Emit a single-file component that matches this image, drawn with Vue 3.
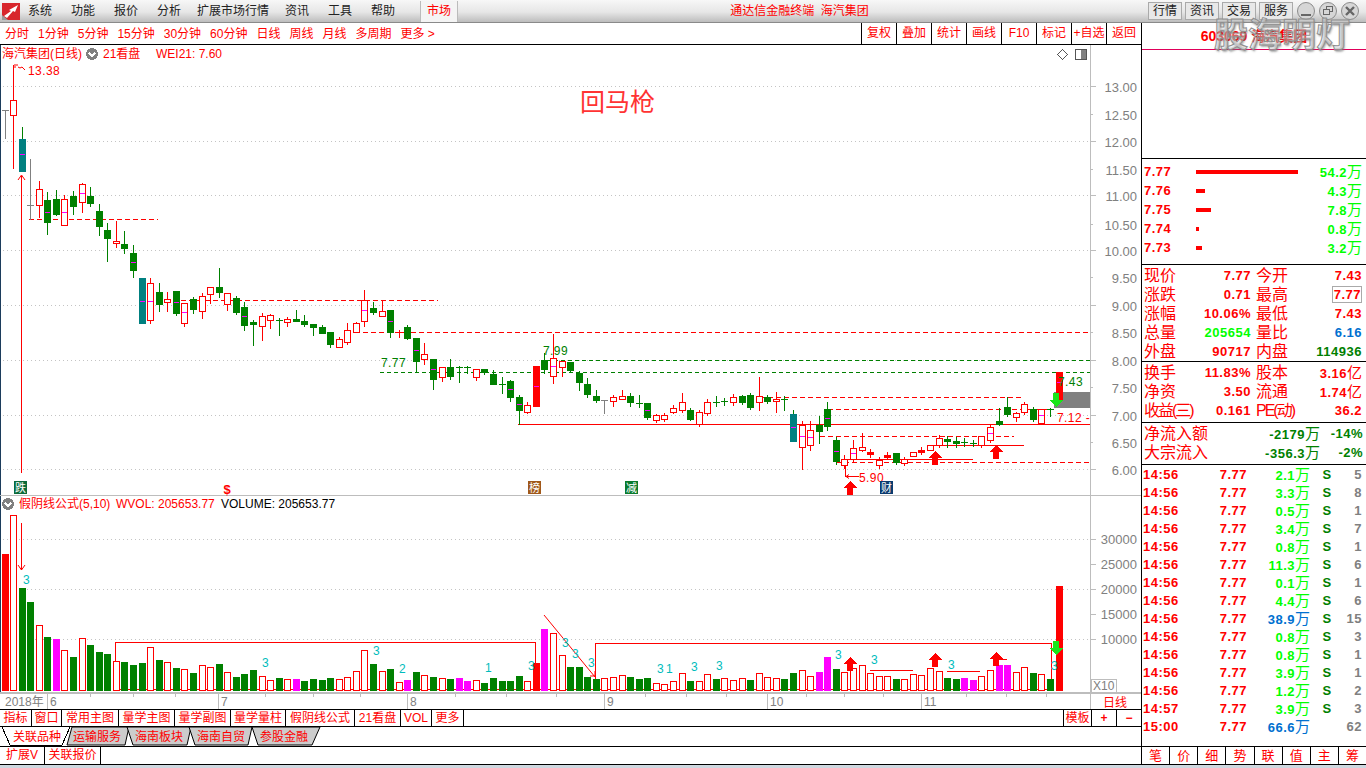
<script setup>
// K-line data: type, body top, body bottom, wick high, wick low, magenta mark (page pixels)
const raw = [
  ['x',110,110,110,138],['h',100,115,65,168],['t',139,171,127,171,154],['x',205,205,159,219],
  ['h',189,205,181,217],['g',200,222,192,234,212],['g',199,214,190,215],['h',199,225,195,225,212],
  ['g',196,206,191,214],['h',184,202,183,212,193],['g',196,203,187,206],['g',211,226,204,235],
  ['g',230,238,223,261],['h',241,243,221,247],['g',244,248,231,253],['g',253,270,245,277,262],
  ['t',278,323,278,323,301],['h',283,320,278,323,301],['g',292,304,283,311],['h',299,302,292,311],
  ['g',291,313,291,315,302],['h',303,323,303,326,312],['g',299,309,297,313],['h',296,311,293,318],
  ['h',287,294,287,303],['g',287,292,268,297],['h',293,304,293,310],['g',298,312,296,314],
  ['g',307,325,302,330,316],['g',322,324,320,345],['h',316,326,313,340],['h',315,320,314,328],
  ['g',320,320,318,335],['h',319,322,317,326],['g',319,321,310,321],['g',321,324,315,326],
  ['g',324,327,324,335],['g',327,333,325,333],['g',332,344,332,347],['h',339,347,337,347],
  ['h',330,342,323,344],['h',323,332,322,332],['h',300,321,290,326,310],['g',308,312,302,314],
  ['h',311,316,300,316],['g',310,332,310,337,321],['h',332,332,330,337],['g',327,338,325,339],
  ['g',338,361,338,372,350],['h',354,359,343,364],['g',359,379,359,389,369],['h',367,377,367,381],
  ['g',367,376,359,379],['g',367,367,366,382],['g',367,367,366,373],['h',369,377,369,380],
  ['g',369,372,369,374],['g',374,384,370,384],['g',384,384,377,393],['g',381,397,380,401,389],
  ['g',397,410,395,424,404],['h',405,412,402,413],['R',366,406,366,406,386],['g',360,369,353,373],
  ['h',358,376,334,383,366],['h',361,367,361,376],['g',362,370,362,372],['g',373,382,371,390],
  ['g',384,394,378,397],['g',396,400,390,402],['x',400,400,400,413],['h',397,401,395,406],
  ['h',396,399,390,399],['g',396,402,393,406],['g',403,403,395,407],['g',403,417,403,419,410],
  ['h',415,420,414,422],['h',415,419,413,421],['h',408,412,405,413],['h',402,410,393,412],
  ['g',410,419,408,420],['h',412,424,410,426],['h',402,413,399,415],['g',402,402,396,406],
  ['g',401,401,398,405],['h',397,402,394,405],['g',396,402,395,404],['g',395,407,393,409],
  ['h',396,402,377,410],['g',397,401,395,403],['h',399,401,392,412],['g',399,399,396,410],
  ['t',414,441,410,441,427],['h',425,447,421,469,436],['h',430,445,421,450,437],['g',425,431,416,443],
  ['g',409,426,402,430,418],['g',440,461,437,464,451],['h',459,465,455,468],['h',448,459,440,462,453],
  ['h',447,450,433,451],['R',452,454,449,457],['h',460,465,457,468],['R',455,457,452,459],
  ['g',453,462,453,464],['h',459,463,457,465],['h',452,456,452,456],['R',450,452,447,454],
  ['h',445,450,445,450],['h',438,445,435,447],['g',439,441,436,447],['g',441,443,437,447],
  ['g',442,442,438,446],['g',443,443,440,446],['h',436,445,436,447],['h',427,440,424,442,433],
  ['g',421,424,408,425],['g',407,414,397,416],['h',413,417,412,421],['h',404,412,402,414],
  ['g',409,419,407,421],['h',409,423,409,423,415],['g',409,409,408,416],['R',372,400,372,400,382]
]

const barX = (i) => Math.floor(2 + i * 8.57)

const candles = raw.map((c, i) => ({
  x: barX(i), type: c[0], top: c[1], bot: c[2], hi: c[3], lo: c[4], mark: c[5]
}))

const volRaw = `R554 h515 g588 g602 h625 g637 m639 h650 g657 h638 g645 g652 g654 h661 g662 g665 g663 h647 g660 h662
g668 h669 g673 h665 h667 g664 h672 g677 g674 g670 h676 h680 g678 h679 m679 g681 g679 g680 g678 h679
h677 h671 h650 g664 h671 g669 h682 m680 g672 h675 g677 h678 g679 m678 m681 h680 g683 g678 g681 g681
g676 h681 R663 m629 h633 h655 g667 g667 g677 g679 h678 h677 h675 g677 g679 g678 h683 h684 h681 h673
g681 h681 h674 g679 h678 h680 h678 g680 h673 h677 h678 g679 g673 h670 h676 m672 m657 g669 h672 h668
h665 h673 h676 h676 g679 h679 h674 h675 h668 h671 g678 g679 m678 m680 h676 h670 m665 m665 h672 h667
g673 h674 g679 R586`

const volumes = volRaw.split(/\s+/).map((s, i) => ({
  x: barX(i), type: s[0], top: Number(s.slice(1))
}))

const gridY = [86.5, 141.5, 195.5, 250.5, 305.5, 360.5, 415.5, 469.5]
const prices = [
  ['13.00', 87], ['12.50', 115], ['12.00', 142], ['11.50', 170], ['11.00', 196], ['10.50', 225],
  ['10.00', 251], ['9.50', 278], ['9.00', 306], ['8.50', 333], ['8.00', 361], ['7.50', 388],
  ['7.00', 416], ['6.50', 443], ['6.00', 470]
]
const volAxis = [['30000', 539], ['25000', 564], ['20000', 589], ['15000', 614], ['10000', 639]]

const dashes = [
  { c: 'dr', x1: 29, x2: 158, y: 219 }, { c: 'dr', x1: 141, x2: 438, y: 300 },
  { c: 'dr', x1: 363, x2: 1090, y: 332 }, { c: 'dg', x1: 547, x2: 1090, y: 360 },
  { c: 'dg', x1: 380, x2: 1090, y: 372 }, { c: 'dr', x1: 760, x2: 1022, y: 397 },
  { c: 'dr', x1: 828, x2: 1047, y: 409 }, { c: 'dr', x1: 820, x2: 1014, y: 436 },
  { c: 'dr', x1: 836, x2: 1090, y: 462 }, { c: 'sr', x1: 518, x2: 1090, y: 424 },
  { c: 'sr', x1: 930, x2: 1024, y: 445 }, { c: 'sr', x1: 847, x2: 973, y: 459 },
  { c: 'sr', x1: 870, x2: 913, y: 670 }, { c: 'sr', x1: 947, x2: 980, y: 671 },
  { c: 'sr', x1: 997, x2: 1007, y: 659 }, { c: 'sr', x1: 115, x2: 1051, y: 689 },
  { c: 'sr', x1: 2, x2: 9, y: 110 }
]

const upArrows = [[850, 481], [935, 451], [996, 445], [850, 657], [935, 653], [996, 652]]
const downArrows = [[1056, 393], [1056, 641]]
const arrowPts = (x, y) =>
  `${x},${y} ${x + 7},${y + 7} ${x + 3},${y + 7} ${x + 3},${y + 14} ${x - 3},${y + 14} ${x - 3},${y + 7} ${x - 7},${y + 7}`
const arrowDownPts = (x, y) =>
  `${x},${y + 14} ${x + 7},${y + 7} ${x + 3},${y + 7} ${x + 3},${y} ${x - 3},${y} ${x - 3},${y + 7} ${x - 7},${y + 7}`

const cyanNums = [
  ['3', 23, 584], ['3', 262, 667], ['3', 373, 655], ['2', 399, 673], ['1', 485, 672], ['3', 528, 670],
  ['3', 562, 647], ['3', 572, 658], ['3', 588, 667], ['3', 657, 673], ['1', 666, 673], ['3', 691, 671],
  ['3', 716, 670], ['3', 835, 659], ['3', 871, 664], ['3', 948, 669], ['3', 1051, 670]
]

const minorTicks = [90, 133, 175, 265, 313, 360, 455, 506, 556, 645, 686, 726, 806, 844, 883, 966, 1006, 1046]
const dateMarks = [['6', 47], ['7', 218], ['8', 407], ['9', 604], ['10', 767], ['11', 921]]

const menus = ['系统', '功能', '报价', '分析', '扩展市场行情', '资讯', '工具', '帮助']
const periods = ['分时', '1分钟', '5分钟', '15分钟', '30分钟', '60分钟', '日线', '周线', '月线', '多周期', '更多 >']
const tools = ['复权', '叠加', '统计', '画线', 'F10', '标记', '+自选', '返回']
const panes = [
  ['指标', 32], ['窗口', 30], ['常用主图', 57], ['量学主图', 56], ['量学副图', 56], ['量学量柱', 55],
  ['假阴线公式', 69], ['21看盘', 46], ['VOL', 31], ['更多', 32]
].map(([name, w]) => ({ name, w, cls: 'w' + w }))

const tabs = [
  { name: '运输服务', pts: '72,727 129,727 125,745 67,745', tx: 97 },
  { name: '海南板块', pts: '127,727 191,727 187,745 133,745', tx: 159 },
  { name: '海南自贸', pts: '189,727 252,727 248,745 195,745', tx: 221 },
  { name: '参股金融', pts: '252,727 320,727 312,745 258,745', tx: 284 }
]

const orders = [
  { p: '7.77', w: 102, v: '54.2' }, { p: '7.76', w: 9, v: '4.3' }, { p: '7.75', w: 15, v: '7.8' },
  { p: '7.74', w: 3, v: '0.8' }, { p: '7.73', w: 6, v: '3.2' }
]

const stats1 = [
  ['现价', '7.77', '', '今开', '7.43', ''], ['涨跌', '0.71', '', '最高', '7.77', 'boxed'],
  ['涨幅', '10.06%', '', '最低', '7.43', ''], ['总量', '205654', 'lime-t', '量比', '6.16', 'blue'],
  ['外盘', '90717', '', '内盘', '114936', 'green']
]
const stats2 = [
  ['换手', '11.83%', '股本', '3.16', 'yi'], ['净资', '3.50', '流通', '1.74', 'yi'],
  ['收益(三)', '0.161', 'PE(动)', '36.2', '']
]

const ticks = [
  ['14:56', '2.1', '5'], ['14:56', '3.3', '8'], ['14:56', '0.5', '1'], ['14:56', '3.4', '7'],
  ['14:56', '0.8', '1'], ['14:56', '11.3', '6'], ['14:56', '0.1', '1'], ['14:56', '4.4', '6'],
  ['14:56', '38.9', '15', 1], ['14:56', '0.8', '3'], ['14:56', '0.8', '1'], ['14:56', '3.9', '1'],
  ['14:56', '1.2', '2'], ['14:57', '3.9', '3'], ['15:00', '66.6', '62', 1, 1]
]
const foot = ['笔', '价', '细', '势', '联', '值', '主', '筹']
</script>

<template>
  <div class="app">
    <header class="titlebar">
      <svg class="logo" width="18" height="17" viewBox="0 0 18 17">
        <rect width="18" height="17" fill="#d8262c" />
        <path d="M0 12 L0 17 L6 17 Z" fill="#9a9a9a" />
        <path d="M2 13 L9 8 L7 7 L16 2 L13 9 L11 8 L5 15 Z" fill="#fff" />
      </svg>
      <nav class="menu">
        <span v-for="m in menus" :key="m" :class="{ wide: m.length > 2 }">{{ m }}</span>
      </nav>
      <span class="market">市场</span>
      <span class="apptitle">通达信金融终端&nbsp;&nbsp;海汽集团</span>
      <div class="winbtns">
        <span class="winbtn">行情</span>
        <span class="winbtn">资讯</span>
        <span class="winbtn">交易</span>
        <span class="winbtn">服务</span>
        <svg class="winctl" width="64" height="20" viewBox="0 0 64 20">
          <g fill="#d6d6d6" stroke="#8c8c8c">
            <circle cx="9" cy="10" r="8.5" />
            <circle cx="31" cy="10" r="8.5" />
            <circle cx="53" cy="10" r="8.5" />
          </g>
          <path d="M4 13h10v2H4z" fill="#666" />
          <path d="M29 5h7v6h-3v3h-7V8h3zM30 6v2h3v2h2V6zM27 9v4h5V9z" fill="#666" />
          <path d="M49 6l8 8M57 6l-8 8" stroke="#666" stroke-width="2.4" />
        </svg>
      </div>
    </header>

    <div class="main">
      <div class="left">
        <div class="toolbar">
          <div class="periods">
            <span v-for="p in periods" :key="p">{{ p }}</span>
          </div>
          <div class="tools">
            <span v-for="t in tools" :key="t">{{ t }}</span>
          </div>
        </div>

        <svg class="chart" width="1141" height="664" viewBox="0 45 1141 664">
          <!-- left edge + separators -->
          <rect x="0" y="45" width="1" height="647" class="navy" />
          <rect x="0" y="495" width="1141" height="1" class="axisline" />
          <rect x="0" y="692" width="1141" height="2" class="axisline" />
          <rect x="1090" y="45" width="1" height="664" class="axisline" />

          <!-- price grid -->
          <line v-for="y in gridY" :key="'g' + y" x1="3" :y1="y" x2="1090" :y2="y" class="dots" />
          <line v-for="y in [539.5, 589.5, 639.5]" :key="'v' + y" x1="3" :y1="y" x2="1090" :y2="y" class="dots" />
          <template v-for="(p, i) in prices" :key="p[0]">
            <rect x="1091" :y="p[1] - 1" :width="i % 2 ? 2 : 5" height="1" class="axisline" />
            <text x="1137" :y="p[1] + 5" class="ax">{{ p[0] }}</text>
          </template>
          <template v-for="a in volAxis" :key="a[0]">
            <rect x="1091" :y="a[1]" width="5" height="1" class="axisline" />
            <text x="1137" :y="a[1] + 5" class="ax">{{ a[0] }}</text>
          </template>

          <!-- gray box near the last candle -->
          <rect x="1054" y="392" width="36" height="16" class="grayblock" />

          <!-- level lines -->
          <line v-for="d in dashes" :key="d.c + d.y + d.x1" :x1="d.x1" :y1="d.y + 0.5" :x2="d.x2" :y2="d.y + 0.5" :class="d.c" />
          <polyline points="115.5,690 115.5,642.5 535.5,642.5 535.5,663" class="box" />
          <polyline points="595.5,690 595.5,643.5 1051.5,643.5 1051.5,688" class="box" />

          <!-- candles -->
          <g v-for="c in candles" :key="'c' + c.x">
            <rect :x="c.x + 3" :y="c.hi" width="1" :height="c.lo - c.hi + 1" :class="'w-' + c.type" />
            <rect v-if="c.bot === c.top" :x="c.x" :y="c.top" width="7" height="1" :class="'w-' + c.type" />
            <rect v-else-if="c.type === 'h'" :x="c.x + 0.5" :y="c.top + 0.5" width="6" :height="c.bot - c.top" class="hollow" />
            <rect v-else :x="c.x" :y="c.top" width="7" :height="c.bot - c.top + 1" :class="'s-' + c.type" />
            <rect v-if="c.mark" :x="c.x + 1" :y="c.mark" width="5" height="1" class="s-m" />
          </g>

          <!-- volume -->
          <g v-for="v in volumes" :key="'v' + v.x">
            <rect v-if="v.type === 'h'" :x="v.x + 0.5" :y="v.top + 0.5" width="6" :height="690 - v.top" class="hollow" />
            <rect v-else :x="v.x" :y="v.top" width="7" :height="691 - v.top" :class="'s-' + v.type" />
          </g>

          <!-- annotations -->
          <path d="M21.5 176V473M18 180l3.5-5 3.5 5" class="thin" />
          <path d="M14 65h4M14 67h2M18 67l2 1 2-1 3 3" class="thin" />
          <path d="M845.5 465V477M846 476.5h13M846 476.5l3-2M846 476.5l3 2" class="thin" />
          <path d="M21.5 523V570M18 565l3.5 5 3.5-5" class="thin" />
          <path d="M544 615L595 677M590 676h5v-5" class="thin" />
          <polygon v-for="a in upArrows" :key="a[0] + '-' + a[1]" :points="arrowPts(a[0], a[1])" class="s-R" />
          <polygon v-for="a in downArrows" :key="a[0] + '_' + a[1]" :points="arrowDownPts(a[0], a[1])" class="lime" />

          <text x="28" y="75" class="lbl">13.38</text>
          <text x="859" y="482" class="lbl">5.90</text>
          <text x="1057" y="422" class="lbl">7.12 -</text>
          <text x="543" y="355" class="lblg">7.99</text>
          <text x="381" y="367" class="lblg">7.77</text>
          <text x="1058" y="386" class="lblg">7.43</text>
          <text x="580" y="111" class="bigtitle">回马枪</text>

          <!-- bottom markers -->
          <rect x="14" y="481" width="13" height="13" class="mk-g" />
          <text x="20.5" y="492" class="mk">跌</text>
          <text x="227" y="494" class="mk-s">$</text>
          <rect x="528" y="481" width="13" height="13" class="mk-b" />
          <text x="534.5" y="492" class="mk">榜</text>
          <rect x="625" y="481" width="13" height="13" class="mk-g2" />
          <text x="631.5" y="492" class="mk">减</text>
          <rect x="880" y="481" width="13" height="13" class="mk-n" />
          <text x="886.5" y="492" class="mk">财</text>

          <!-- pane headers -->
          <text x="2" y="58" class="hd">海汽集团(日线)</text>
          <circle cx="92" cy="54" r="6" class="knob" />
          <path d="M89 53l3 3 3-3" class="chev" />
          <text x="103" y="58" class="hd">21看盘</text>
          <text x="156" y="58" class="hd">WEI21: 7.60</text>
          <path d="M1062.5 49.5l5 5-5 5-5-5z" class="icon" />
          <rect x="1075.5" y="49.5" width="11" height="10" rx="1" class="icon" />
          <rect x="1081" y="50" width="5" height="9" class="knob" />

          <circle cx="8" cy="504" r="6" class="knob" />
          <path d="M5 503l3 3 3-3" class="chev" />
          <text x="19" y="508" class="hd">假阴线公式(5,10)</text>
          <text x="116" y="508" class="hd">WVOL: 205653.77</text>
          <text x="221" y="508" class="hdk">VOLUME: 205653.77</text>

          <text v-for="n in cyanNums" :key="n[1]" :x="n[1]" :y="n[2]" class="cy">{{ n[0] }}</text>

          <!-- date axis -->
          <rect v-for="x in minorTicks" :key="'t' + x" :x="x" y="694" width="1" height="3" class="axisline" />
          <template v-for="d in dateMarks" :key="d[0]">
            <rect :x="d[1]" y="694" width="1" height="15" class="axisline" />
            <text :x="d[1] + 3" y="706" class="dt">{{ d[0] }}</text>
          </template>
          <text x="5" y="706" class="dt">2018年</text>
          <rect x="1091.5" y="679.5" width="25" height="13" class="x10box" />
          <text x="1093" y="690" class="dt">X10</text>
          <text x="1103" y="707" class="hd">日线</text>
        </svg>

        <div class="panes">
          <span v-for="p in panes" :key="p.name" :class="p.cls">{{ p.name }}</span>
          <div class="panes-right">
            <span class="tpl">模板</span>
            <span class="pm">+</span>
            <span class="pm">−</span>
          </div>
        </div>

        <svg class="tabs" width="1141" height="20" viewBox="0 726 1141 20">
          <line x1="0" y1="726.5" x2="1141" y2="726.5" class="tabline" />
          <path d="M2 727L10 745H62L70 727" class="tabline" />
          <text x="13" y="741" class="tabtxt">关联品种</text>
          <g v-for="t in tabs" :key="t.name">
            <polygon :points="t.pts" class="tabshape" />
            <text :x="t.tx - 24" y="741" class="tabtxt">{{ t.name }}</text>
          </g>
        </svg>

        <div class="bottomrow">
          <span class="b1">扩展V</span>
          <span class="b2">关联报价</span>
        </div>
      </div>

      <aside class="side">
        <div class="side-top">
          <div class="code">603069 海汽集团</div>
        </div>
        <div class="orders">
          <div v-for="o in orders" :key="o.p" class="order">
            <b class="num">{{ o.p }}</b>
            <div class="bartrack">
              <i class="obar" :style="{ width: o.w + 'px' }"></i>
            </div>
            <b class="num lime-t qty">{{ o.v }}<span class="wan">万</span></b>
          </div>
        </div>
        <div class="stats s5">
          <div v-for="r in stats1" :key="r[0]" class="srow">
            <div class="scell"><span class="slabel">{{ r[0] }}</span><b class="num" :class="r[2]">{{ r[1] }}</b></div>
            <div class="scell"><span class="slabel">{{ r[3] }}</span><b class="num" :class="r[5]">{{ r[4] }}</b></div>
          </div>
        </div>
        <div class="stats s3">
          <div v-for="r in stats2" :key="r[0]" class="srow">
            <div class="scell">
              <span class="slabel" :class="{ tight: r[0].length > 2 }">{{ r[0] }}</span>
              <b class="num">{{ r[1] }}</b>
            </div>
            <div class="scell">
              <span class="slabel" :class="{ tight: r[2].length > 2 }">{{ r[2] }}</span>
              <b class="num">{{ r[3] }}<span v-if="r[4]" class="wan">亿</span></b>
            </div>
          </div>
        </div>
        <div class="flow">
          <div class="frow">
            <span class="slabel flabel">净流入额</span>
            <b class="num green fval">-2179<span class="wan">万</span></b>
            <b class="num green fpct">-14%</b>
          </div>
          <div class="frow">
            <span class="slabel flabel">大宗流入</span>
            <b class="num green fval">-356.3<span class="wan">万</span></b>
            <b class="num green fpct">-2%</b>
          </div>
        </div>
        <div class="ticks">
          <div v-for="(t, i) in ticks" :key="i" class="tick">
            <b class="num">{{ t[0] }}</b>
            <b class="num tr">7.77</b>
            <b class="num tr" :class="t[3] ? 'blue' : 'lime-t'">{{ t[1] }}<span class="wan">万</span></b>
            <b class="num green tc">{{ t[4] ? '' : 'S' }}</b>
            <b class="num tr graynum">{{ t[2] }}</b>
          </div>
        </div>
        <div class="foot">
          <span v-for="f in foot" :key="f">{{ f }}</span>
        </div>
        <div class="watermark">股海明灯</div>
      </aside>
    </div>
    <div class="edge"></div>
  </div>
</template>

<style scoped>
.app {
  position: relative;
  width: 1366px;
  height: 768px;
  overflow: hidden;
  background: #fff;
  color: #f00;
  font-family: "Liberation Sans", "Noto Sans CJK SC", sans-serif;
  font-size: 12px;
  line-height: 1;
}

/* title bar */
.titlebar {
  display: flex;
  align-items: center;
  height: 23px;
  box-sizing: border-box;
  padding-left: 2px;
  background: linear-gradient(#f7f7f7, #e6e6e6 55%, #bdbdbd);
  border-bottom: 1px solid #8a8a8a;
}
.logo { flex: none; }
.menu {
  display: flex;
  gap: 19px;
  margin-left: 8px;
  color: #222;
}
.menu .wide { margin: 0 -3px; }
.market {
  margin-left: 25px;
  width: 36px;
  height: 21px;
  line-height: 21px;
  text-align: center;
  background: #f4f4f4;
  border-left: 1px solid #bbb;
  border-right: 1px solid #bbb;
}
.apptitle { margin-left: 272px; }
.winbtns {
  display: flex;
  align-items: center;
  gap: 3px;
  margin-left: auto;
  padding-right: 5px;
}
.winbtn {
  width: 34px;
  height: 18px;
  line-height: 17px;
  box-sizing: border-box;
  text-align: center;
  color: #222;
  background: #e8e8e8;
  border: 1px solid #aaa;
}
.winctl { margin-left: 1px; }

/* layout */
.main {
  display: flex;
  height: 742px;
}
.left {
  width: 1141px;
  flex: none;
  display: flex;
  flex-direction: column;
}
.edge {
  height: 3px;
  background: #cfd8e0;
}

/* period toolbar */
.toolbar {
  display: flex;
  justify-content: space-between;
  height: 22px;
  box-sizing: border-box;
  border-bottom: 1px solid #000;
}
.periods {
  display: flex;
  align-items: center;
  gap: 9px;
  padding-left: 5px;
}
.tools { display: flex; }
.tools span {
  width: 35px;
  line-height: 21px;
  text-align: center;
  border-left: 1px solid #000;
  box-sizing: border-box;
}

/* chart */
.chart {
  display: block;
  flex: none;
  shape-rendering: crispEdges;
}
.navy { fill: #1c3c5c; }
.axisline { fill: #bdbdbd; }
.dots { stroke: #c4c4c4; stroke-dasharray: 1 3; }
.ax {
  fill: #808080;
  font-size: 13px;
  text-anchor: end;
}
.grayblock { fill: #808080; }
.dr { stroke: #f00; stroke-dasharray: 5 3; }
.dg { stroke: #008000; stroke-dasharray: 4 3; }
.sr { stroke: #f00; }
.box { fill: none; stroke: #f00; }
.hollow { fill: #fff; stroke: #f00; }
.w-h, .w-R { fill: #f00; }
.w-g, .w-t { fill: #008000; }
.w-x { fill: #808080; }
.s-g { fill: #008000; }
.s-t { fill: #008080; }
.s-R { fill: #f00; }
.s-m { fill: #f0f; }
.lime { fill: #19e619; }
.thin { fill: none; stroke: #f00; shape-rendering: auto; }
.lbl { fill: #f00; font-size: 12px; letter-spacing: 0.4px; }
.lblg { fill: #008000; font-size: 12px; letter-spacing: 0.4px; }
.bigtitle {
  fill: #f33;
  font-size: 25px;
}
.mk-g { fill: #0b6b3a; }
.mk-g2 { fill: #0a7a2c; }
.mk-b { fill: #a0581a; }
.mk-n { fill: #0b3a6e; }
.mk {
  fill: #fff;
  font-size: 11px;
  text-anchor: middle;
}
.mk-s { fill: #f00; font-size: 13px; font-weight: 700; text-anchor: middle; }
.hd { fill: #f00; font-size: 12px; }
.hdk { fill: #000; font-size: 12px; }
.knob { fill: #808080; }
.chev { fill: none; stroke: #fff; stroke-width: 1.5; }
.icon { fill: #fff; stroke: #555; }
.cy { fill: #00bcbc; font-size: 12px; }
.dt { fill: #808080; font-size: 12px; }
.x10box { fill: #fff; stroke: #bdbdbd; }

/* pane tabs */
.panes {
  display: flex;
  height: 17px;
  box-sizing: border-box;
  border-top: 1px solid #000;
  font-size: 12px;
}
.panes > span {
  line-height: 16px;
  text-align: center;
  border-right: 1px solid #000;
  box-sizing: border-box;
}
.w32 { width: 32px; }
.w30 { width: 30px; }
.w57 { width: 57px; }
.w56 { width: 56px; }
.w55 { width: 55px; }
.w69 { width: 69px; }
.w46 { width: 46px; }
.w31 { width: 31px; }
.panes-right {
  display: flex;
  margin-left: auto;
  line-height: 16px;
  text-align: center;
}
.tpl {
  width: 28px;
  border-left: 1px solid #000;
  box-sizing: border-box;
}
.pm {
  width: 25px;
  border-left: 1px solid #000;
  box-sizing: border-box;
  font-weight: 700;
}
.tabs {
  display: block;
  flex: none;
}
.tabline { fill: none; stroke: #000; shape-rendering: crispEdges; }
.tabshape { fill: #ccc; stroke: #000; }
.tabtxt { fill: #f00; font-size: 12px; }
.bottomrow {
  display: flex;
  height: 19px;
  box-sizing: border-box;
  border-top: 1px solid #000;
  border-bottom: 1px solid #000;
}
.bottomrow span {
  line-height: 17px;
  text-align: center;
  border-right: 1px solid #000;
  box-sizing: border-box;
}
.b1 { width: 45px; }
.b2 { width: 56px; }

/* right panel */
.side {
  position: relative;
  flex: 1;
  display: flex;
  flex-direction: column;
  border-left: 1px solid #000;
}
.num {
  font-weight: 700;
  font-size: 13px;
  letter-spacing: 0.5px;
  white-space: nowrap;
}
.wan {
  font-weight: 400;
  font-size: 15px;
  letter-spacing: 0;
}
.lime-t { color: #00ff00; }
.green { color: #008000; }
.blue { color: #0070d0; }
.graynum { color: #808080; }
.side-top {
  height: 136px;
  box-sizing: border-box;
  border-bottom: 1px solid #000;
}
.code {
  height: 27px;
  line-height: 26px;
  box-sizing: border-box;
  text-align: center;
  font-weight: 700;
  font-size: 14px;
  border-bottom: 1px solid #e0005a;
}
.orders {
  height: 106px;
  box-sizing: border-box;
  padding: 3px 4px 0 2px;
  border-bottom: 1px solid #000;
}
.order {
  display: flex;
  align-items: center;
  height: 19px;
}
.order .num { width: 52px; }
.bartrack { flex: 1; }
.obar {
  display: block;
  height: 4px;
  background: #f00;
}
.order .qty {
  width: 60px;
  text-align: right;
}
.stats {
  box-sizing: border-box;
  padding: 1px 3px 0 2px;
  border-bottom: 1px solid #000;
}
.s5 { height: 97px; }
.s3 { height: 61px; }
.srow {
  display: flex;
  gap: 5px;
  height: 19px;
}
.scell {
  display: flex;
  justify-content: space-between;
  align-items: center;
  width: 107px;
}
.scell + .scell { width: 106px; }
.slabel {
  font-size: 16px;
  white-space: nowrap;
}
.tight { letter-spacing: -2px; }
.boxed {
  box-sizing: border-box;
  width: 30px;
  height: 17px;
  line-height: 15px;
  text-align: right;
  border: 1px solid #aaa;
}
.flow {
  height: 42px;
  box-sizing: border-box;
  padding: 1px 3px 0 2px;
  border-bottom: 1px solid #000;
}
.frow {
  display: flex;
  align-items: center;
  height: 19px;
}
.flabel { width: 66px; }
.fval {
  width: 110px;
  text-align: right;
}
.fpct {
  flex: 1;
  text-align: right;
}
.ticks {
  flex: 1;
  padding-left: 1px;
}
.tick {
  display: grid;
  grid-template-columns: 40px 64px 63px 34px 18px;
  align-items: center;
  height: 18px;
}
.tr { text-align: right; }
.tc { text-align: center; }
.foot {
  display: flex;
  height: 19px;
  box-sizing: border-box;
  border-top: 1px solid #000;
  border-bottom: 1px solid #000;
}
.foot span {
  flex: 1;
  line-height: 17px;
  text-align: center;
  border-right: 1px solid #000;
  font-size: 13px;
}
.foot span:last-child { border-right: 0; }
.watermark {
  position: absolute;
  left: 72px;
  top: -9px;
  font-size: 34px;
  font-weight: 700;
  line-height: 42px;
  white-space: nowrap;
  color: rgba(255, 255, 255, 0.25);
  -webkit-text-stroke: 1px #8e8e8e;
  text-shadow: 1px 2px 2px rgba(120, 120, 120, 0.6);
}
</style>
